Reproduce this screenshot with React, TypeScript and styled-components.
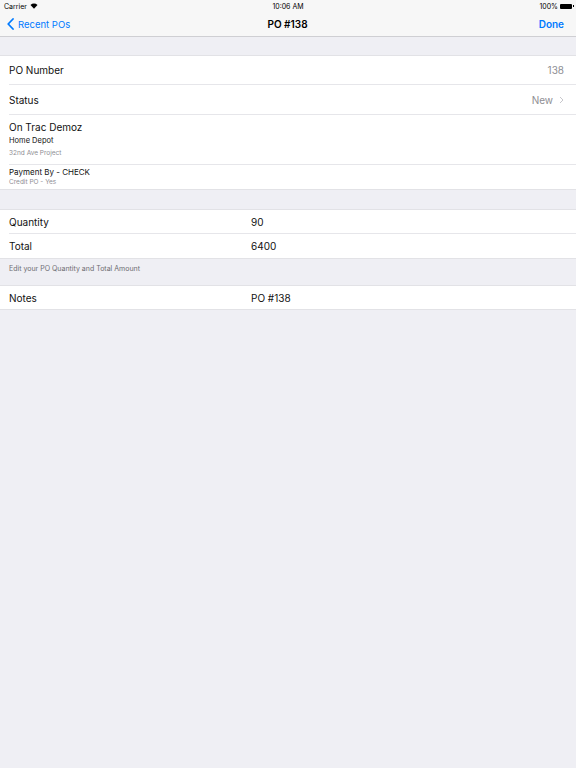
import React from "react";
import styled, { createGlobalStyle } from "styled-components";

const Global = createGlobalStyle`
  html, body { margin: 0; padding: 0; background: #efeff4; }
  body { font-family: Inter, Roboto, "Liberation Sans", Arial, sans-serif; -webkit-font-smoothing: antialiased; }
  #root { min-height: 768px; background: #efeff4; }
`;

const Page = styled.div`
  width: 576px;
  min-height: 768px;
  background: #efeff4;
  display: flex;
  flex-direction: column;
`;

const Header = styled.header`
  background: #f7f7f7;
  border-bottom: 1px solid #cfcfd3;
  display: flex;
  flex-direction: column;
`;

const StatusBar = styled.div`
  height: 12px;
  display: grid;
  grid-template-columns: 1fr auto 1fr;
  align-items: center;
  padding: 0 4px;
  font-size: 7px;
  color: #000;
`;

const StatusLeft = styled.div`
  display: flex;
  align-items: center;
  gap: 3px;
`;

const StatusRight = styled.div`
  display: flex;
  justify-content: flex-end;
  align-items: center;
  gap: 2px;
`;

const Battery = styled.div`
  width: 12px;
  height: 5px;
  background: #000;
  border-radius: 1px;
  position: relative;
  &::after {
    content: "";
    position: absolute;
    right: -2px;
    top: 1.5px;
    width: 1px;
    height: 2px;
    background: #000;
  }
`;

const NavBar = styled.div`
  height: 24px;
  display: grid;
  grid-template-columns: 1fr auto 1fr;
  align-items: center;
  padding: 0 8px 0 7px;
`;

const BackButton = styled.div`
  display: flex;
  align-items: center;
  gap: 4px;
  color: #007aff;
  font-size: 9.5px;
`;

const Title = styled.div`
  font-size: 10px;
  font-weight: 600;
  color: #000;
`;

const Done = styled.div`
  justify-self: end;
  color: #007aff;
  font-size: 10px;
  font-weight: 600;
  padding-right: 4px;
`;

const Section = styled.section<{ $top: number }>`
  margin-top: ${(p) => p.$top}px;
  background: #fff;
  border-top: 1px solid #e2e2e6;
  border-bottom: 1px solid #e2e2e6;
  display: flex;
  flex-direction: column;
`;

const Row = styled.div<{ $h: number; $last?: boolean }>`
  height: ${(p) => p.$h}px;
  margin-left: 9px;
  padding-right: 12px;
  display: flex;
  align-items: center;
  border-bottom: ${(p) => (p.$last ? "none" : "1px solid #e6e6ea")};
  box-sizing: border-box;
`;

const Label = styled.div`
  font-size: 10px;
  color: #111;
  flex: 1;
`;

const Value = styled.div`
  font-size: 10px;
  color: #8e8e93;
  display: flex;
  align-items: center;
  gap: 6px;
`;

const FieldLabel = styled.div`
  font-size: 10px;
  color: #111;
  width: 242px;
`;

const FieldValue = styled.div`
  font-size: 10px;
  color: #111;
`;

const Stack = styled.div<{ $h: number; $last?: boolean }>`
  height: ${(p) => p.$h}px;
  margin-left: 9px;
  display: flex;
  flex-direction: column;
  justify-content: center;
  border-bottom: ${(p) => (p.$last ? "none" : "1px solid #e6e6ea")};
  box-sizing: border-box;
`;

const Title2 = styled.div`
  font-size: 10px;
  color: #111;
  line-height: 13px;
`;

const Sub = styled.div<{ $tight?: boolean }>`
  font-size: ${(p) => (p.$tight ? "8px" : "7.5px")};
  color: #111;
  line-height: ${(p) => (p.$tight ? "11px" : "13px")};
`;

const Tiny = styled.div<{ $tight?: boolean }>`
  font-size: 6.5px;
  color: #8e8e93;
  line-height: ${(p) => (p.$tight ? "9px" : "12px")};
`;

const Footer = styled.div`
  height: 26px;
  padding: 5px 9px 0;
  font-size: 7px;
  color: #6d6d72;
  box-sizing: border-box;
`;

const Chevron = () => (
  <svg width="5" height="8" viewBox="0 0 5 8">
    <path d="M1 1l3 3-3 3" fill="none" stroke="#c7c7cc" strokeWidth="1" />
  </svg>
);

export default function App() {
  return (
    <Page>
      <Global />
      <Header>
        <StatusBar>
          <StatusLeft>
            Carrier
            <svg width="8" height="6" viewBox="0 0 8 6">
              <path d="M0.5 2 A5 5 0 0 1 7.5 2 L4 5.8 Z" fill="#000" />
            </svg>
          </StatusLeft>
          <div>10:06 AM</div>
          <StatusRight>
            100%
            <Battery />
          </StatusRight>
        </StatusBar>
        <NavBar>
          <BackButton>
            <svg width="7" height="12" viewBox="0 0 7 12">
              <path d="M6 1L1.2 6 6 11" fill="none" stroke="#007aff" strokeWidth="1.8" strokeLinecap="round" strokeLinejoin="round" />
            </svg>
            Recent POs
          </BackButton>
          <Title>PO #138</Title>
          <Done>Done</Done>
        </NavBar>
      </Header>

      <Section $top={18}>
        <Row $h={29}>
          <Label>PO Number</Label>
          <Value>138</Value>
        </Row>
        <Row $h={30}>
          <Label>Status</Label>
          <Value>
            New <Chevron />
          </Value>
        </Row>
        <Stack $h={50}>
          <Title2>On Trac Demoz</Title2>
          <Sub>Home Depot</Sub>
          <Tiny>32nd Ave Project</Tiny>
        </Stack>
        <Stack $h={24} $last>
          <Sub $tight>Payment By - CHECK</Sub>
          <Tiny $tight>Credit PO - Yes</Tiny>
        </Stack>
      </Section>

      <Section $top={19}>
        <Row $h={24}>
          <FieldLabel>Quantity</FieldLabel>
          <FieldValue>90</FieldValue>
        </Row>
        <Row $h={24} $last>
          <FieldLabel>Total</FieldLabel>
          <FieldValue>6400</FieldValue>
        </Row>
      </Section>
      <Footer>Edit your PO Quantity and Total Amount</Footer>

      <Section $top={0}>
        <Row $h={23} $last>
          <FieldLabel>Notes</FieldLabel>
          <FieldValue>PO #138</FieldValue>
        </Row>
      </Section>
    </Page>
  );
}
